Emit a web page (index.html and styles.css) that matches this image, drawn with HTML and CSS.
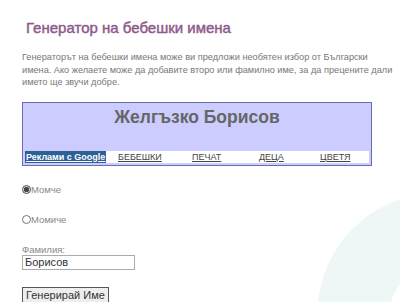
FILE: index.html
```html
<html>
<head>
<title>Генератор на бебешки имена</title>
<link rel="stylesheet" href="styles.css">
</head>
<body>

<div class="page">
  <h1 class="title">Генератор на бебешки имена</h1>
  <p class="intro">Генераторът на бебешки имена може ви предложи необятен избор от Български<br>имена. Ако желаете може да добавите второ или фамилно име, за да прецените дали<br>името ще звучи добре.</p>

  <div class="result">
    <div class="result-name">Желгъзко Борисов</div>
    <div class="ad-links">
      <span class="ad-google">Реклами с Google</span>
      <a href="#">БЕБЕШКИ</a>
      <a href="#">ПЕЧАТ</a>
      <a href="#">ДЕЦА</a>
      <a href="#">ЦВЕТЯ</a>
    </div>
  </div>

  <form class="name-form">
    <label class="choice"><input type="radio" name="gender" checked>Момче</label>
    <label class="choice"><input type="radio" name="gender">Момиче</label>
    <div class="field">
      <label for="surname">Фамилия:</label>
      <input type="text" id="surname" value="Борисов">
    </div>
    <button type="button">Генерирай Име</button>
  </form>
</div>

</body>
</html>
```

FILE: styles.css
```css
body {
  margin: 0;
  font-family: "Liberation Sans", Arial, sans-serif;
  color: #777;
  background: #fff radial-gradient(circle at 438px 314px, transparent 48px, #eef6f6 49px, #eef6f6 120px, #fff 121px) no-repeat;
  height: 302px;
  overflow: hidden;
}

.page {
  padding: 0 22px;
}

.title {
  margin: 0;
  padding: 19px 0 0 4px;
  font-size: 15px;
  line-height: 18px;
  font-weight: normal;
  -webkit-text-stroke: 0.45px #8e5a8c;
  color: #8e5a8c;
}

.intro {
  margin: 14px 0 0;
  font-size: 9.2px;
  line-height: 12.5px;
  color: #777;
  white-space: nowrap;
}

.result {
  margin-top: 13px;
  width: 344px;
  border: 1px solid #6b6bb0;
  background: #ccccff;
  padding: 3px 2px 2px;
}

.result-name {
  text-align: center;
  font-size: 17.5px;
  line-height: 22px;
  font-weight: bold;
  color: #666;
  height: 45px;
}

.ad-links {
  display: grid;
  grid-template-columns: 88px 74px 67px 61px auto;
  background: #fff;
  font-size: 9px;
  line-height: 12px;
  white-space: nowrap;
}

.ad-google {
  justify-self: start;
  background: #2c6198;
  color: #fff;
  font-weight: bold;
  text-decoration: underline;
  padding: 0 1px;
}

.ad-links a {
  color: #444;
  padding-left: 5px;
}

.name-form {
  margin-top: 18px;
  font-size: 9.5px;
  color: #888;
}

.choice {
  display: flex;
  align-items: center;
  height: 12px;
  margin-bottom: 18px;
}

.choice input {
  margin: 0;
  width: 9px;
  height: 9px;
  accent-color: #444;
}

.field {
  margin-top: 15px;
}

.field label {
  display: block;
  line-height: 11px;
}

.field input {
  margin-top: 0;
  width: 113px;
  height: 15px;
  padding: 0 2px;
  border: 1px solid #a5acb2;
  font-family: inherit;
  font-size: 11px;
  color: #333;
  box-sizing: border-box;
}

button {
  margin-top: 17px;
  padding: 1px 3px;
  font-family: inherit;
  font-size: 11px;
  color: #333;
  background: #eee;
  border: 1px solid #555;
}
```
